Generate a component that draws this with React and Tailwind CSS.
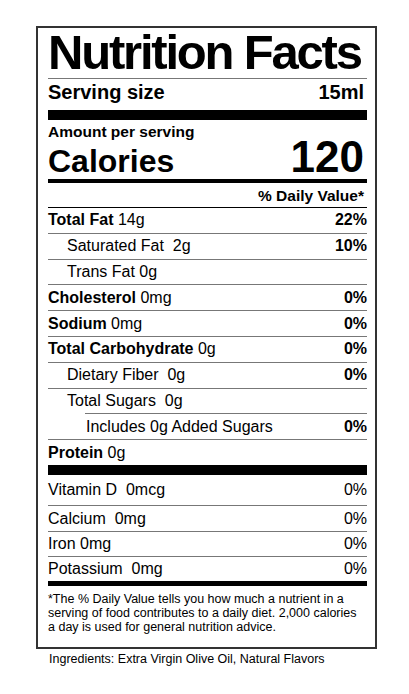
import React from "react";

const nutrients = [
    { label: "Total Fat", amount: " 14g", dv: "22%", bold: true },
    { label: "Saturated Fat  2g", dv: "10%", indent: 1 },
    { label: "Trans Fat 0g", indent: 1 },
    { label: "Cholesterol", amount: " 0mg", dv: "0%", bold: true },
    { label: "Sodium", amount: " 0mg", dv: "0%", bold: true },
    { label: "Total Carbohydrate", amount: " 0g", dv: "0%", bold: true },
    { label: "Dietary Fiber  0g", dv: "0%", indent: 1 },
    { label: "Total Sugars  0g", indent: 1 },
    { label: "Includes 0g Added Sugars", dv: "0%", indent: 2 },
    { label: "Protein", amount: " 0g", bold: true, last: true },
];

const vitamins = [
    { label: "Vitamin D  0mcg", h: "h-[30px]" },
    { label: "Calcium  0mg", h: "h-[26px] border-t border-[#777]" },
    { label: "Iron 0mg", h: "h-[25px] border-t border-[#777]" },
    { label: "Potassium  0mg", h: "h-[25px] border-t border-[#777]" },
];

const NutrientRow = ({ item, first }) => {
    // indented rows: level 2 also moves its top line in
    const wrap =
        item.indent === 2
            ? "ml-[37px] pl-[1px]"
            : item.indent === 1
            ? "pl-[19px]"
            : "";
    const height = item.last ? "h-[26px]" : first ? "h-[24.8px]" : "h-[25.8px]";
    return (
        <div
            className={`flex items-center justify-between text-[16px] leading-[16px] ${height} ${wrap} ${
                first ? "" : "border-t border-[#777]"
            }`}
        >
            <span className="whitespace-pre">
                {item.bold ? <span className="font-bold">{item.label}</span> : item.label}
                {item.amount}
            </span>
            {item.dv && <span className="font-bold">{item.dv}</span>}
        </div>
    );
};

export default function App() {
    return (
        <div className="min-h-screen bg-white pt-[26px] pl-[36px] text-black font-['Liberation_Sans',Arial,sans-serif]">
            <div className="w-[341px] border-2 border-[#333] pl-[10px] pr-[8px]">
                {/* Header */}
                <div className="h-[51px] border-b border-[#777] text-[49px] leading-[49px] font-bold tracking-[-2.2px] whitespace-nowrap">
                    Nutrition Facts
                </div>
                <div className="flex justify-between h-[31px] pt-[3px] pr-[3px] text-[20px] leading-[20px] font-bold">
                    <span>Serving size</span>
                    <span>15ml</span>
                </div>
                <div className="h-[10px] bg-black" />

                {/* Calories */}
                <div className="mt-[4px] h-[16px] text-[15.5px] leading-[16px] font-bold">Amount per serving</div>
                <div className="flex justify-between items-baseline h-[39px] pr-[3px] font-bold">
                    <span className="text-[32px] leading-[32px]">Calories</span>
                    <span className="text-[44px] leading-[34px]">120</span>
                </div>
                <div className="h-[4px] bg-black" />
                <div className="h-[25px] pt-[4.5px] pr-[3px] border-b border-black text-right text-[15.5px] leading-[16px] font-bold">
                    % Daily Value*
                </div>

                {/* Nutrients */}
                {nutrients.map((item, index) => (
                    <NutrientRow key={index} item={item} first={index === 0} />
                ))}
                <div className="h-[10px] bg-black" />

                {/* Vitamins & minerals */}
                {vitamins.map((item, index) => (
                    <div
                        key={index}
                        className={`flex items-center justify-between text-[16px] leading-[16px] ${item.h}`}
                    >
                        <span className="whitespace-pre">{item.label}</span>
                        <span>0%</span>
                    </div>
                ))}
                <div className="h-[5px] bg-black" />

                {/* Footnote */}
                <p className="pt-[6px] pb-[13px] text-[12.5px] leading-[14px] whitespace-nowrap">
                    *The % Daily Value tells you how much a nutrient in a
                    <br />
                    serving of food contributes to a daily diet. 2,000 calories
                    <br />
                    a day is used for general nutrition advice.
                </p>
            </div>
            <p className="mt-[3px] ml-[13px] text-[12.5px] leading-[14px]">
                Ingredients: Extra Virgin Olive Oil, Natural Flavors
            </p>
        </div>
    );
}
